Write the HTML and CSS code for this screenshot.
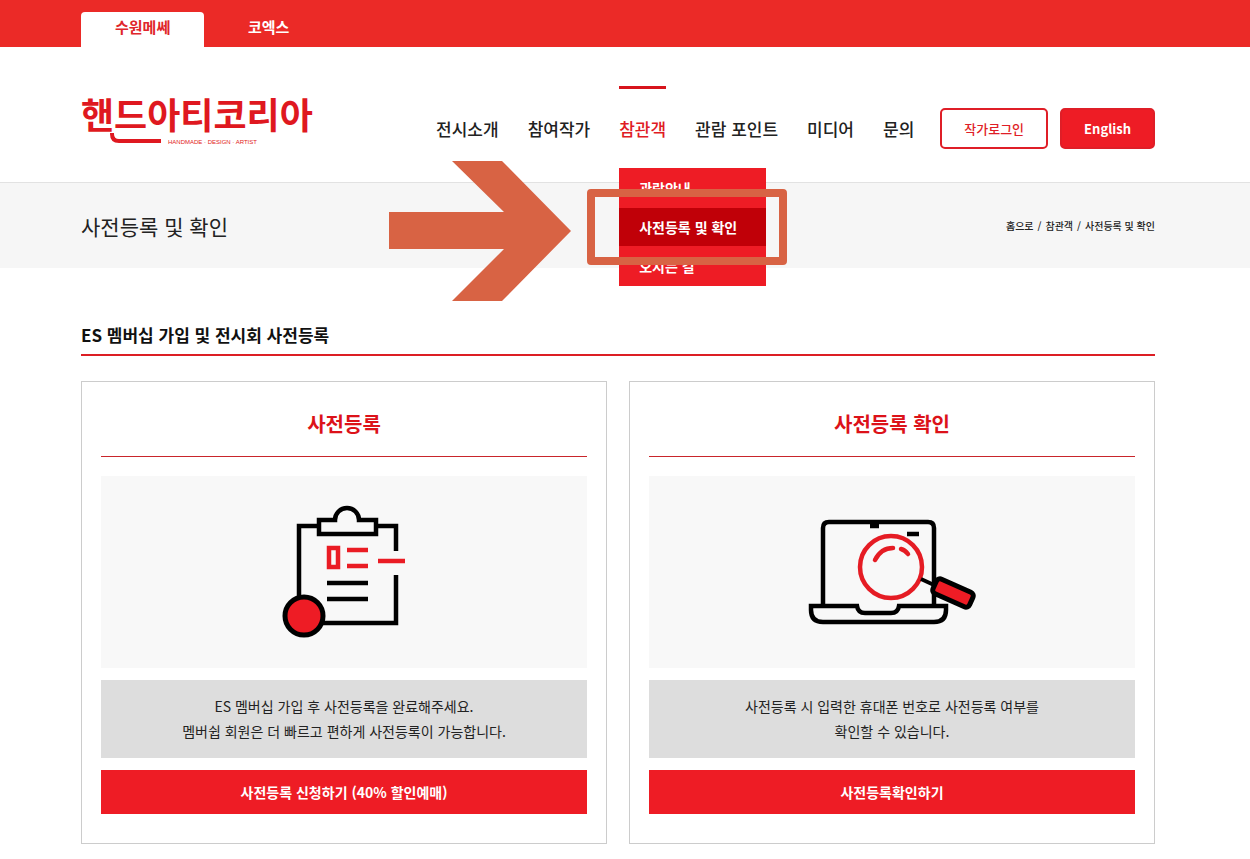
FILE: index.html
```
<!DOCTYPE html>
<html lang="ko">
<head>
  <meta charset="UTF-8" />
  <meta name="viewport" content="width=device-width, initial-scale=1.0"/>
  <title>사전등록 및 확인 - 핸드아티코리아</title>
  <link rel="stylesheet" href="styles.css">
</head>
<body>
<div class="topbar">
  <div class="wrap tabs">
    <a href="#" class="tab active">수원메쎄</a>
    <a href="#" class="tab">코엑스</a>
  </div>
</div>

<header class="header">
  <div class="wrap header-inner">
    <a href="#" class="logo">
      <svg width="236" height="64" viewBox="0 -10 236 64">
        <text class="logo-name" x="0" y="33">핸드아티코리아</text>
        <path d="M31 37v1q0 7 7 7h42" fill="none" stroke="#df1820" stroke-width="4"/>
        <text class="logo-sub" x="87" y="48">HANDMADE · DESIGN · ARTIST</text>
      </svg>
    </a>
    <nav class="nav">
      <ul class="menu">
        <li><a href="#">전시소개</a></li>
        <li><a href="#">참여작가</a></li>
        <li class="active">
          <a href="#">참관객</a>
          <ul class="submenu">
            <li><a href="#">관람안내</a></li>
            <li><a href="#" class="current">사전등록 및 확인</a></li>
            <li><a href="#">오시는 길</a></li>
          </ul>
          <svg class="arrow" width="184" height="142" viewBox="0 0 184 142">
            <path d="M1 52h115L64 1h50l69 70-69 70H64l52-52H1z" fill="#d86344"/>
          </svg>
          <span class="marker"></span>
        </li>
        <li><a href="#">관람 포인트</a></li>
        <li><a href="#">미디어</a></li>
        <li><a href="#">문의</a></li>
      </ul>
    </nav>
    <div class="header-btns">
      <a href="#" class="btn-login">작가로그인</a>
      <a href="#" class="btn-lang">English</a>
    </div>
  </div>
</header>

<div class="page-title">
  <div class="wrap page-title-inner">
    <h1>사전등록 및 확인</h1>
    <div class="breadcrumb">
      <a href="#">홈으로</a><span>/</span><a href="#">참관객</a><span>/</span><a href="#">사전등록 및 확인</a>
    </div>
  </div>
</div>

<main class="wrap content">
  <h2>ES 멤버십 가입 및 전시회 사전등록</h2>
  <div class="cards">
    <section class="card">
      <h3>사전등록</h3>
      <div class="card-img">
        <svg width="124" height="134" viewBox="0 0 124 134" fill="none" stroke="#000" stroke-width="4.5">
          <path d="M37 21H17v80M94 21h20v25M114 70v48H40"/>
          <path d="M37 15h16a12 12 0 0 1 24 0h17v14H37z"/>
          <path d="M45 78h41M45 94h41"/>
          <path d="M47 43h9v19H47zM65 45h21M65 61h21M96 56h27" stroke="#ea1c24"/>
          <circle cx="22" cy="111" r="19" fill="#ee1c25" stroke-width="5"/>
        </svg>
      </div>
      <p class="card-text">ES 멤버십 가입 후 사전등록을 완료해주세요.<br>멤버쉽 회원은 더 빠르고 편하게 사전등록이 가능합니다.</p>
      <a href="#" class="card-btn">사전등록 신청하기 (40% 할인예매)</a>
    </section>
    <section class="card">
      <h3>사전등록 확인</h3>
      <div class="card-img">
        <svg width="168" height="106" viewBox="0 0 168 106" fill="none" stroke="#000" stroke-width="4.5">
          <path d="M15 87V9q0-6 6-6h99q6 0 6 6v78"/>
          <path d="M62 7h9M99 15h12"/>
          <path d="M3 87h46q1 7 8 7h26q7 0 8-7h47v4q0 12-12 12H15Q3 103 3 91z"/>
          <circle cx="83" cy="48" r="31" fill="#f8f8f8" stroke="#e51c24"/>
          <path d="M67 41q6-12 18-12M93 30q4 1 7 5" stroke="#e51c24" stroke-linecap="round"/>
          <path d="M113 60l13 6" stroke-width="4"/>
          <rect x="-20" y="-8" width="40" height="16" rx="4" transform="translate(145 74) rotate(24)" fill="#ee1c25" stroke-width="5"/>
        </svg>
      </div>
      <p class="card-text">사전등록 시 입력한 휴대폰 번호로 사전등록 여부를<br>확인할 수 있습니다.</p>
      <a href="#" class="card-btn">사전등록확인하기</a>
    </section>
  </div>
</main>
</body>
</html>
```
FILE: styles.css
```
* {
  box-sizing: border-box;
}

body {
  margin: 0;
  background-color: #fff;
  font-family: "Noto Sans CJK KR", sans-serif;
  color: #222;
}

a {
  color: inherit;
  text-decoration: none;
}

ul, h1, h2, h3, p {
  margin: 0;
  padding: 0;
}

ul {
  list-style: none;
}

.wrap {
  padding: 0 95px 0 81px;
}

.topbar {
  background-color: #eb2a27;
  padding-top: 12px;
}

.tabs {
  display: flex;
  gap: 3px;
}

.tab {
  padding: 0 34px 6px;
  min-width: 123px;
  line-height: 29px;
  text-align: center;
  font-size: 15px;
  font-weight: 700;
  color: #fff;
  border-radius: 4px 4px 0 0;
}

.tab.active {
  background-color: #fff;
  color: #e0262b;
}

.header {
  border-bottom: 1px solid #e2e2e2;
  padding: 39px 0 32px;
}

.header-inner {
  display: flex;
  align-items: flex-start;
}

.logo svg {
  display: block;
}

.logo-name {
  font-size: 36px;
  font-weight: 700;
  fill: #df1820;
}

.logo-sub {
  font-family: "Liberation Sans", sans-serif;
  font-size: 6px;
  fill: #df1820;
}

.nav {
  margin: 22px 26px 0 auto;
}

.menu {
  display: flex;
  gap: 29px;
  line-height: 41px;
  font-size: 17px;
  font-weight: 500;
  white-space: nowrap;
}

.menu > li {
  position: relative;
}

.menu > .active > a {
  color: #e01b24;
}

.menu > .active::before {
  content: "";
  position: absolute;
  top: -22px;
  left: 0;
  width: 100%;
  height: 3px;
  background-color: #d7141c;
}

.submenu {
  position: absolute;
  top: 60px;
  left: 0;
  z-index: 10;
  width: 147px;
  padding: 1px 0;
  display: grid;
  gap: 1px;
  background-color: #ee1c25;
  color: #fff;
  font-size: 14px;
  font-weight: 700;
  line-height: 38px;
}

.submenu a {
  display: block;
  padding: 0 20px;
}

.submenu .current {
  background-color: #c00008;
}

/* guide arrow and frame over the submenu */
.arrow {
  position: absolute;
  top: 52px;
  left: -231px;
  z-index: 11;
}

.marker {
  position: absolute;
  top: 81px;
  left: -32px;
  z-index: 11;
  width: 200px;
  height: 76px;
  border: 8px solid #d86344;
  border-radius: 4px;
}

.header-btns {
  display: flex;
  gap: 12px;
  margin-top: 22px;
  line-height: 37px;
  white-space: nowrap;
  font-size: 13px;
}

.header-btns a {
  padding: 0 22px;
  border: 2px solid #df1e27;
  border-radius: 5px;
}

.btn-login {
  color: #df1e27;
  font-weight: 500;
}

.btn-lang {
  background-color: #ee1c25;
  color: #fff;
  font-weight: 700;
}

.page-title {
  background-color: #f6f6f6;
}

.page-title-inner {
  display: flex;
  justify-content: space-between;
  align-items: center;
  height: 85px;
}

.page-title h1 {
  font-size: 21px;
  font-weight: 400;
}

.breadcrumb {
  display: flex;
  gap: 4px;
  font-size: 10px;
  font-weight: 500;
}

.content {
  padding-top: 52px;
  padding-bottom: 15px;
}

.content h2 {
  padding-bottom: 4px;
  border-bottom: 2px solid #dc1e24;
  line-height: 30px;
  font-size: 17px;
  font-weight: 700;
  color: #111;
}

.cards {
  display: grid;
  grid-template-columns: 1fr 1fr;
  gap: 22px;
  margin-top: 25px;
}

.card {
  border: 1px solid #ccc;
  padding: 12px 19px 29px;
}

.card h3 {
  padding-bottom: 2px;
  border-bottom: 1px solid #c9252b;
  line-height: 60px;
  text-align: center;
  font-size: 20px;
  font-weight: 700;
  color: #dc1219;
}

.card-img {
  display: flex;
  justify-content: center;
  align-items: center;
  height: 192px;
  margin: 19px 0 12px;
  background-color: #f8f8f8;
}

.card-text {
  padding: 14px 10px;
  background-color: #ddd;
  text-align: center;
  font-size: 14px;
  line-height: 25px;
}

.card-btn {
  display: block;
  margin-top: 12px;
  background-color: #ee1c25;
  color: #fff;
  text-align: center;
  font-size: 14px;
  font-weight: 700;
  line-height: 44px;
}
```
